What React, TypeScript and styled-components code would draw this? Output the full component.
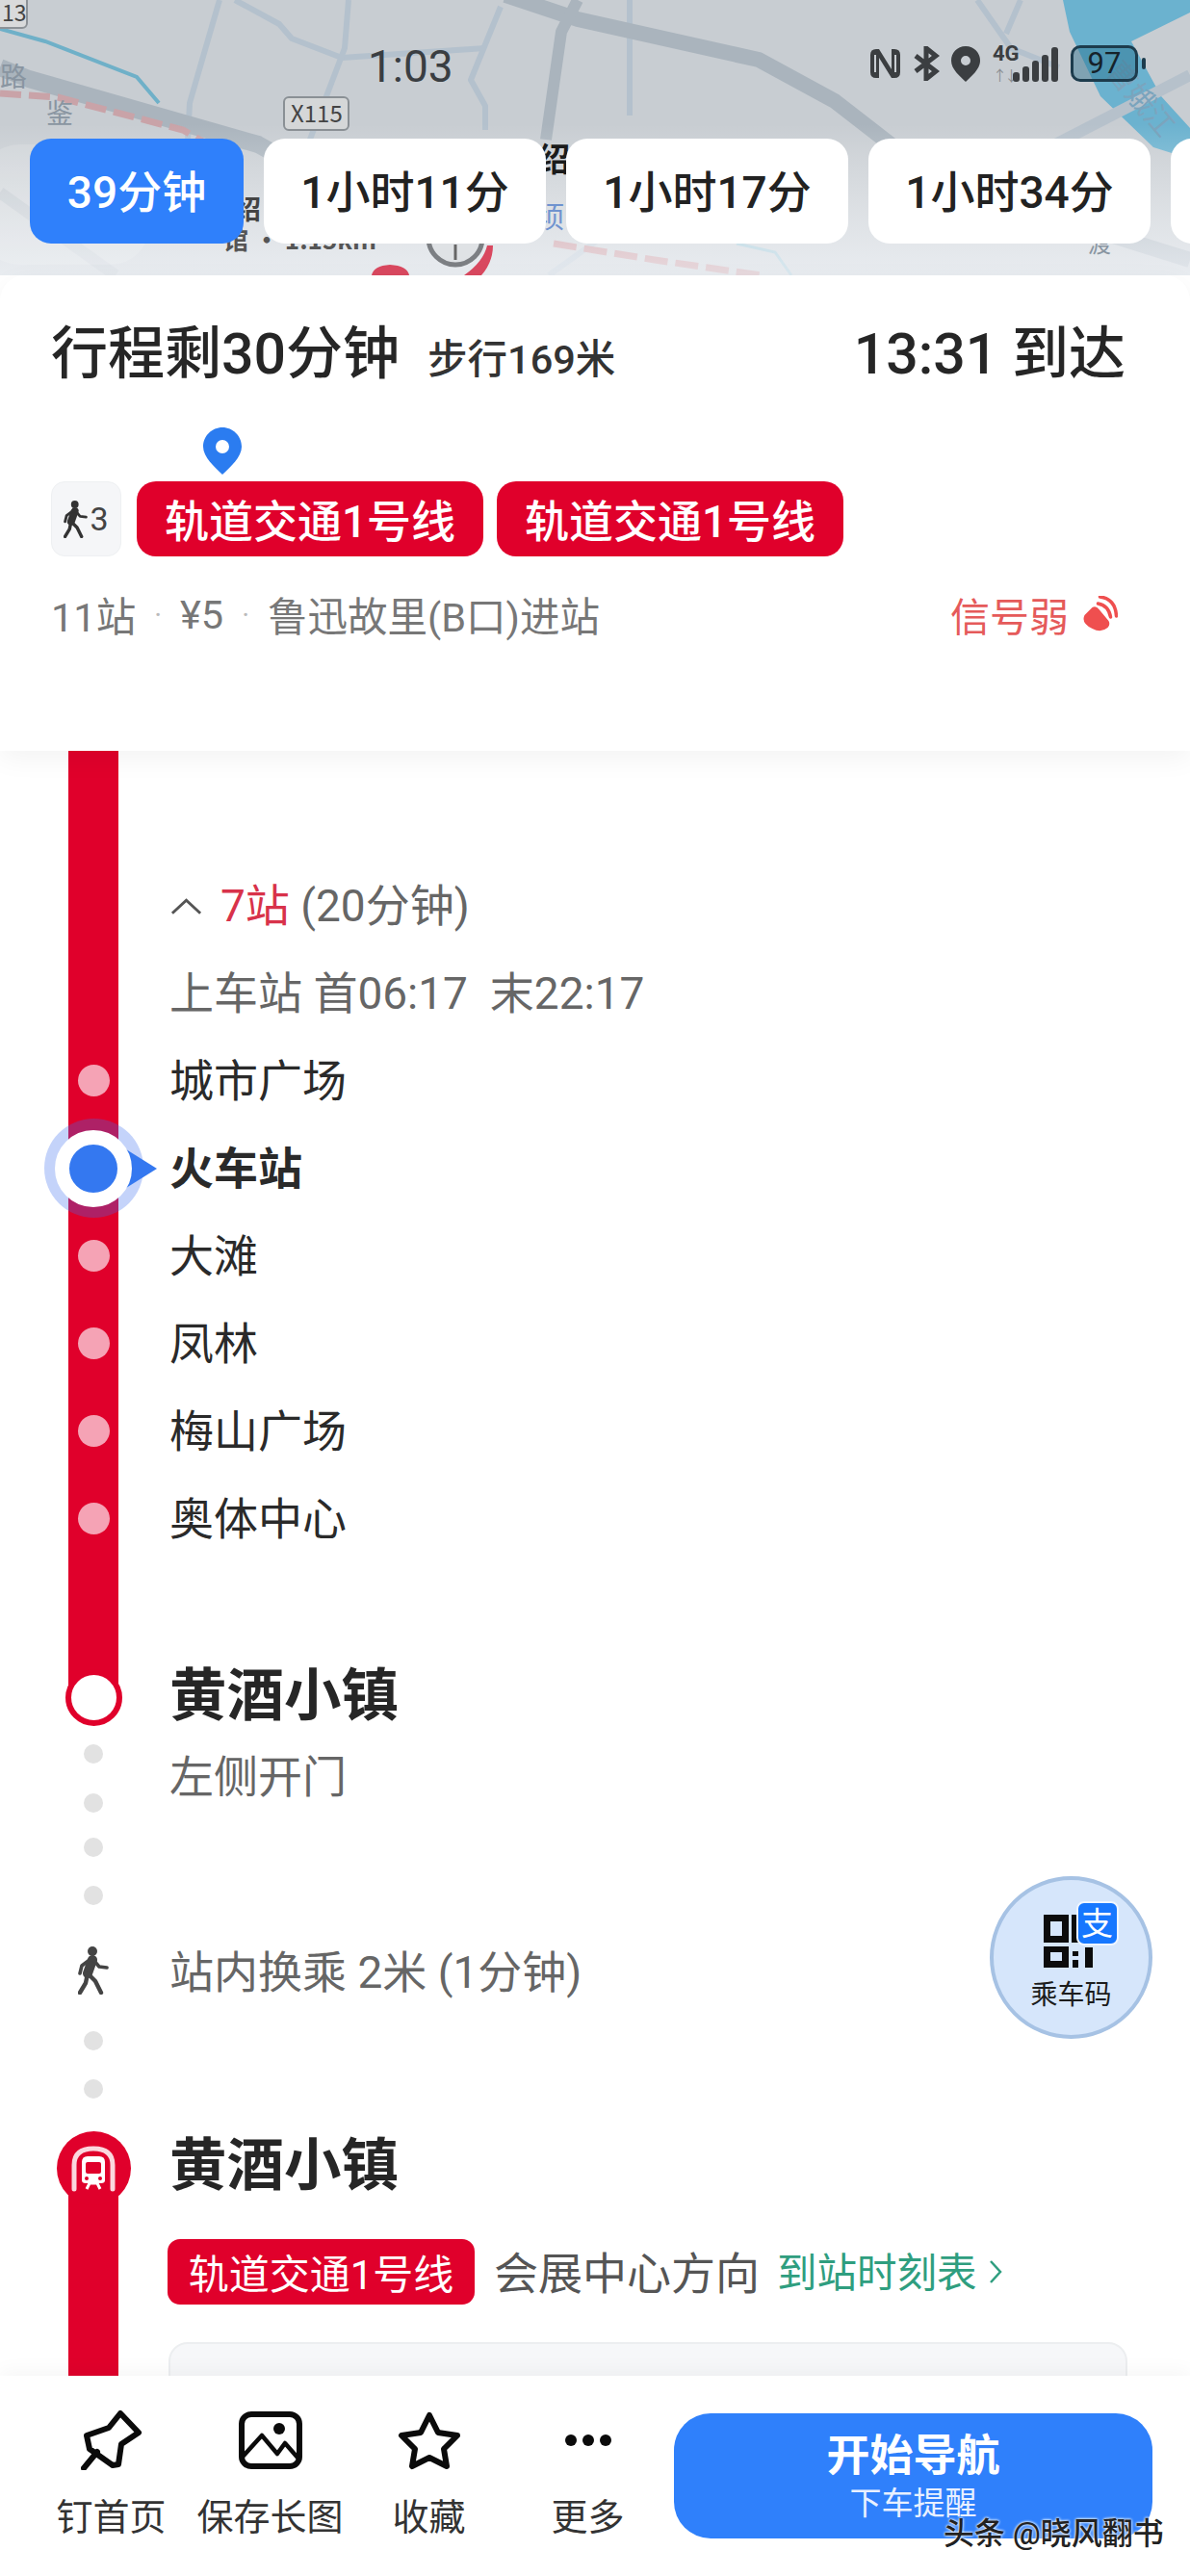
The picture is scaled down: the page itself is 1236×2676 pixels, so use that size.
import React from 'react'
import styled, { createGlobalStyle } from 'styled-components'

const RED = '#e0002b'
const BLUE = '#2f80fb'

const Global = createGlobalStyle`
  html, body { margin: 0; padding: 0; background: #fff; }
  body { font-family: Roboto, "Noto Sans CJK SC", sans-serif; color: #222; }
`

const stops = ['城市广场', '火车站', '大滩', '凤林', '梅山广场', '奥体中心']
const tabs = ['1小时11分', '1小时17分', '1小时34分']

const MapArt = () => (
  <MapSvg viewBox="0 0 1236 286">
    <defs>
      <linearGradient id="fade" x1="0" y1="0" x2="0" y2="1">
        <stop offset="0.45" stopColor="#fff" stopOpacity="0" />
        <stop offset="1" stopColor="#f3f6fa" stopOpacity="0.75" />
      </linearGradient>
    </defs>
    <rect width="1236" height="286" fill="#c8cdd2" />
    <polygon points="1104,0 1236,0 1236,13 1175,43 1206,100 1236,133 1236,165 1198,153 1143,100 1111,33" fill="#6bb2cf" />
    <g fill="none" stroke="#b4c1cd" strokeWidth="6" strokeLinejoin="round">
      <path d="M228 0 L197 107 L190 240" />
      <path d="M244 0 L290 25 L303 40 L355 60 L504 50" />
      <path d="M362 0 L358 50 L339 100 L320 150" />
      <path d="M520 7 L489 83 L504 110 L504 135" />
      <path d="M654 0 L654 120" />
      <path d="M1015 0 L1050 50 L1100 70" />
      <path d="M1060 0 L1045 35" />
      <path d="M620 250 L570 286" />
    </g>
    <path d="M1096 150 L1236 78" fill="none" stroke="#b6c1cb" strokeWidth="12" />
    <g fill="none" stroke="#aab4bd" strokeLinejoin="round">
      <path d="M525 -5 L600 20 L788 62 L867 105 L925 150" strokeWidth="16" />
      <path d="M600 0 L583 33 L567 145" strokeWidth="12" />
      <path d="M0 70 L30 82 L268 150 L340 190" strokeWidth="18" />
      <path d="M1140 240 L1236 270" strokeWidth="16" />
      <path d="M0 200 L120 286" strokeWidth="12" opacity="0.6" />
    </g>
    <path d="M0 30 L47 43 L142 80 L165 107" fill="none" stroke="#6fb0c8" strokeWidth="4" />
    <path d="M765 253 L805 262 L822 286" fill="none" stroke="#8fbfd0" strokeWidth="3" />
    <path d="M0 97 L60 101 L190 135 L250 170" fill="none" stroke="#c9a3a8" strokeWidth="7" strokeDasharray="22 8" />
    <path d="M575 253 L680 270 L790 286" fill="none" stroke="#c4858c" strokeWidth="7" strokeDasharray="24 8" />
    <rect width="1236" height="286" fill="url(#fade)" />
    <rect x="-20" y="150" width="175" height="125" rx="40" fill="#fff" opacity="0.14" />
    <MapLabel x="0" y="90" fontSize="28" fill="#8995a1">路</MapLabel>
    <MapLabel x="48" y="128" fontSize="28" fill="#8995a1">鉴</MapLabel>
    <MapLabel x="558" y="178" fontSize="34" fontWeight="700" fill="#1b1b1b">绍</MapLabel>
    <MapLabel x="556" y="236" fontSize="30" fill="#6f93cf">顷</MapLabel>
    <MapLabel x="243" y="228" fontSize="28" fontWeight="700" fill="#444">绍</MapLabel>
    <MapLabel x="232" y="259" fontSize="26" fontWeight="700" fill="#555">馆 · 1.15km</MapLabel>
    <MapLabel transform="translate(1148 75) rotate(50)" x="0" y="0" fontSize="30" fill="#7ba4bd">曹娥江</MapLabel>
    <MapLabel x="1130" y="262" fontSize="24" fill="#8995a1">渡</MapLabel>
    <circle cx="473" cy="247" r="28" fill="#dfe2e5" stroke="#7c7f83" strokeWidth="5" />
    <path d="M473 254 V270" stroke="#666" strokeWidth="3" />
    <path d="M506 255 Q502 272 482 286 L500 286 Q512 272 512 255 Z" fill="#d9485f" />
    <path d="M386 286 Q388 276 405 275 Q423 276 425 286 Z" fill="#d9485f" />
    <rect x="-30" y="-8" width="58" height="37" rx="5" fill="#d9dadb" stroke="#8d9297" strokeWidth="2" />
    <MapLabel x="2" y="22" fontSize="23" fill="#444">13</MapLabel>
    <rect x="295" y="101" width="67" height="34" rx="5" fill="#d5d7d8" stroke="#8a9095" strokeWidth="2" />
    <MapLabel x="302" y="127" fontSize="24" fill="#444">X115</MapLabel>
  </MapSvg>
)

const StatusIcons = () => (
  <StatusGroup>
    <svg width="35" height="34" viewBox="0 0 35 34" fill="none">
      <path d="M11 2 H8 Q2 2 2 8 V26 Q2 32 8 32 H11 V11 L24 32 H27 Q33 32 33 26 V8 Q33 2 27 2 H24 V23 L11 2 Z" fill="#3b3e41" />
      <path d="M7 8 V26 M28 8 V26" stroke="#c8cdd2" strokeWidth="2" />
    </svg>
    <svg width="27" height="36" viewBox="0 0 27 36">
      <path d="M2 10 L23 26 L13 34 V2 L23 10 L2 26" fill="none" stroke="#3b3e41" strokeWidth="5" />
    </svg>
    <svg width="30" height="37" viewBox="0 0 30 37">
      <path fillRule="evenodd" fill="#3b3e41" d="M15 0 C6 0 0 7 0 15 C0 24 9 31 15 37 C21 31 30 24 30 15 C30 7 24 0 15 0 Z M15 10 A5 5 0 1 1 15 20 A5 5 0 1 1 15 10 Z" />
    </svg>
    <Signal>
      <FourG>4G</FourG>
      <Arrows>↑↓</Arrows>
      <Bars>
        {[10, 16, 22, 28, 36].map(h => (
          <Bar key={h} style={{ height: h }} />
        ))}
      </Bars>
    </Signal>
    <Battery>97</Battery>
    <BatteryNub />
  </StatusGroup>
)

const WalkIcon = ({ w, h, color }: { w: number; h: number; color: string }) => (
  <svg width={w} height={h} viewBox="0 0 32 50" fill="none" stroke={color} strokeLinecap="round" strokeLinejoin="round">
    <circle cx="15" cy="5" r="5" fill={color} stroke="none" />
    <path d="M15 14 L10 28" strokeWidth="10" />
    <path d="M16 14 L22 21 L30 22" strokeWidth="3.6" />
    <path d="M12 14 L4 20 L2 28" strokeWidth="3.6" />
    <path d="M10 28 L8 38 L2 48" strokeWidth="4.4" />
    <path d="M10 28 L18 36 L24 48" strokeWidth="4.4" />
  </svg>
)

const WeakIcon = () => (
  <svg width="37" height="38" viewBox="0 0 36 38">
    <path d="M2 20 L10 12 Q14 10 17 14 L27 26 Q29 30 26 33 Q19 39 10 34 Q-2 28 2 20 Z" fill="#ef4f4f" />
    <path d="M16 8 Q27 10 29 22 M18 1 Q34 3 35 21" fill="none" stroke="#ef4f4f" strokeWidth="3.5" strokeLinecap="round" />
  </svg>
)

const PinIcon = () => (
  <svg width="40" height="49" viewBox="0 0 40 49">
    <path fillRule="evenodd" fill="#2b7cf0" d="M20 0 C9 0 0 9 0 20 C0 31 12 41 20 49 C28 41 40 31 40 20 C40 9 31 0 20 0 Z M20 13 A7 7 0 1 1 20 27 A7 7 0 1 1 20 13 Z" />
  </svg>
)

const MetroIcon = () => (
  <svg width="46" height="48" viewBox="0 0 46 48" fill="none">
    <path d="M3 45 V20 Q3 3 23 3 Q43 3 43 20 V45" stroke="#fbd7de" strokeWidth="5" strokeLinecap="round" />
    <path d="M11 36 V17 Q11 11 17 11 H29 Q35 11 35 17 V36 Q35 39 31 39 H15 Q11 39 11 36 Z" fill="#fff" />
    <rect x="15" y="17" width="16" height="12" rx="2" fill={RED} />
    <path d="M16 45 L19 39 H27 L30 45" stroke="#fff" strokeWidth="3" />
    <circle cx="16" cy="34" r="2" fill={RED} />
    <circle cx="30" cy="34" r="2" fill={RED} />
  </svg>
)

const NavPin = () => (
  <svg width="64" height="62" viewBox="0 0 64 62" fill="none" stroke="#0b0b0b" strokeWidth="6" strokeLinejoin="round" strokeLinecap="round">
    <path d="M41 3 L60 23 L42 35 L39 56 L33 57 L9 40 L6 26 L29 18 Z" />
    <path d="M17 43 L3 60" />
  </svg>
)

const NavImage = () => (
  <svg width="66" height="60" viewBox="0 0 66 60" fill="none" stroke="#0b0b0b" strokeWidth="6" strokeLinejoin="round">
    <rect x="3" y="3" width="60" height="54" rx="10" />
    <circle cx="42" cy="18" r="6" fill="#0b0b0b" stroke="none" />
    <path d="M4 47 L24 25 L40 44 L48 33 L62 49" strokeWidth="4.5" />
  </svg>
)

const NavStar = () => (
  <svg width="66" height="62" viewBox="0 0 66 62" fill="none" stroke="#0b0b0b" strokeWidth="6" strokeLinejoin="round">
    <path d="M33 5 L42 23 L62 26 L48 40 L51 58 L33 49 L15 58 L18 40 L4 26 L24 23 Z" />
  </svg>
)

const QrCode = () => (
  <svg width="54" height="58" viewBox="0 0 54 58">
    <path fillRule="evenodd" fill="#0c0c0c" d="M2 2 H28 V31 H2 Z M9 9 V24 H21 V9 Z" />
    <path fillRule="evenodd" fill="#0c0c0c" d="M2 35 H28 V57 H2 Z M9 41 V50 H21 V41 Z" />
    <rect x="31" y="2" width="7" height="29" fill="#0c0c0c" />
    <rect x="32" y="40" width="6" height="5" fill="#0c0c0c" />
    <rect x="32" y="49" width="6" height="8" fill="#0c0c0c" />
    <rect x="45" y="36" width="8" height="21" fill="#0c0c0c" />
  </svg>
)

const App = () => {
  return (
    <Page>
      <Global />
      <Header>
        <MapArt />
        <StatusBar>
          <Time>1:03</Time>
          <StatusIcons />
        </StatusBar>
        <Tabs>
          <Tab $active $w={222}>39分钟</Tab>
          {tabs.map(t => (
            <Tab key={t} $w={293}>{t}</Tab>
          ))}
          <Tab $w={120} />
        </Tabs>
      </Header>

      <Panel>
        <TitleRow>
          <Title>行程剩30分钟</Title>
          <Walk>步行169米</Walk>
          <Arrive>13:31 到达</Arrive>
        </TitleRow>
        <Route>
          <PinSpot><PinIcon /></PinSpot>
          <WalkChip>
            <WalkIcon w={25} h={39} color="#333" />
            <ChipNum>3</ChipNum>
          </WalkChip>
          <LinePill>轨道交通1号线</LinePill>
          <LinePill>轨道交通1号线</LinePill>
        </Route>
        <Meta>
          <span>11站</span>
          <Sep>·</Sep>
          <span>¥5</span>
          <Sep>·</Sep>
          <span>鲁迅故里(B口)进站</span>
          <Weak>信号弱 <WeakIcon /></Weak>
        </Meta>
      </Panel>

      <Main>
        <Row $h={115}><Rail /></Row>
        <Row $h={91}>
          <Rail />
          <Label>
            <Chevron viewBox="0 0 36 20"><path d="M3 18 L18 4 L33 18" /></Chevron>
            <Count>7站</Count>
            <Muted> (20分钟)</Muted>
          </Label>
        </Row>
        <Row $h={91}>
          <Rail />
          <Label $grey>上车站 首06:17&nbsp;&nbsp;末22:17</Label>
        </Row>
        {stops.map((s, i) => (
          <Row $h={91} key={s}>
            <Rail>
              {i === 1 ? (
                <Marker><MarkerDot /><MarkerTip /></Marker>
              ) : (
                <Stop />
              )}
            </Rail>
            <Label $bold={i === 1}>{s}</Label>
          </Row>
        ))}
        <Row $h={109}><Rail /></Row>
        <Row $h={60}>
          <Rail $until={33}><EndRing /></Rail>
          <StationName>黄酒小镇</StationName>
        </Row>

        <Transfer>
          <GreyRail>
            <GreyDot $top={20} />
            <GreyDot $top={31} />
            <GreyDot $top={26} />
            <GreyDot $top={30} />
            <WalkSlot><WalkIcon w={32} h={50} color="#444" /></WalkSlot>
            <GreyDot $top={38} />
            <GreyDot $top={30} />
          </GreyRail>
          <TransferText>
            <Label $grey>左侧开门</Label>
            <TransferNote>站内换乘 2米 (1分钟)</TransferNote>
          </TransferText>
        </Transfer>

        <NextStation>
          <HeadRail>
            <Head><MetroIcon /></Head>
          </HeadRail>
          <NextBody>
            <StationName>黄酒小镇</StationName>
            <Direction>
              <SmallPill>轨道交通1号线</SmallPill>
              <DirText>会展中心方向</DirText>
              <Timetable>到站时刻表</Timetable>
              <TimeChevron viewBox="0 0 14 26"><path d="M2 2 L12 13 L2 24" /></TimeChevron>
            </Direction>
            <GreyCard />
          </NextBody>
        </NextStation>
      </Main>

      <BottomBar>
        <NavItem><NavIcon><NavPin /></NavIcon><NavText>钉首页</NavText></NavItem>
        <NavItem><NavIcon><NavImage /></NavIcon><NavText>保存长图</NavText></NavItem>
        <NavItem><NavIcon><NavStar /></NavIcon><NavText>收藏</NavText></NavItem>
        <NavItem>
          <NavIcon><More><i /><i /><i /></More></NavIcon>
          <NavText>更多</NavText>
        </NavItem>
        <StartButton>
          <StartTitle>开始导航</StartTitle>
          <StartSub>下车提醒</StartSub>
        </StartButton>
      </BottomBar>

      <RideCode>
        <QrWrap>
          <QrCode />
          <AliBadge>支</AliBadge>
        </QrWrap>
        <RideText>乘车码</RideText>
      </RideCode>
      <Watermark>头条 @晓风翻书</Watermark>
    </Page>
  )
}

export default App

const Page = styled.div`
  position: relative;
  width: 1236px;
  height: 2676px;
  overflow: hidden;
  display: flex;
  flex-direction: column;
  background: #fff;
`
const Header = styled.header`
  position: relative;
  height: 286px;
  flex: none;
  overflow: hidden;
`
const MapSvg = styled.svg`
  position: absolute;
  inset: 0;
  width: 1236px;
  height: 286px;
`
const MapLabel = styled.text`
  font-family: "Noto Sans CJK SC", Roboto, sans-serif;
`
const StatusBar = styled.div`
  position: relative;
  height: 144px;
  box-sizing: border-box;
  padding: 46px 46px 0 382px;
  display: flex;
  align-items: flex-start;
  justify-content: space-between;
`
const Time = styled.div`
  font-size: 46px;
  line-height: 46px;
  color: #3a3e42;
`
const StatusGroup = styled.div`
  display: flex;
  align-items: center;
  gap: 12px;
  height: 40px;
`
const Signal = styled.div`
  position: relative;
  width: 68px;
  height: 38px;
  margin-left: 1px;
`
const FourG = styled.span`
  position: absolute;
  left: 0;
  top: -3px;
  font-size: 22px;
  line-height: 24px;
  font-weight: 700;
  color: #3b3e41;
`
const Arrows = styled.span`
  position: absolute;
  left: 0;
  bottom: -3px;
  font-size: 15px;
  line-height: 18px;
  letter-spacing: -3px;
  color: #8b8f93;
`
const Bars = styled.div`
  position: absolute;
  right: 0;
  bottom: 0;
  display: flex;
  align-items: flex-end;
  gap: 3px;
`
const Bar = styled.span`
  width: 7px;
  border-radius: 3px;
  background: #3b3e41;
`
const Battery = styled.div`
  width: 70px;
  height: 38px;
  margin-left: 1px;
  box-sizing: border-box;
  border: 3px solid #1d3c4d;
  border-radius: 10px;
  background: rgba(40, 110, 140, 0.45);
  text-align: center;
  font-size: 31px;
  line-height: 32px;
  color: #16222a;
`
const BatteryNub = styled.span`
  width: 4px;
  height: 12px;
  margin-left: -8px;
  border-radius: 2px;
  background: #1d3c4d;
`
const Tabs = styled.div`
  position: relative;
  display: flex;
  gap: 21px;
  padding-left: 31px;
`
const Tab = styled.div<{ $active?: boolean; $w: number }>`
  flex: none;
  box-sizing: border-box;
  width: ${p => p.$w}px;
  height: 109px;
  padding-bottom: 6px;
  display: flex;
  align-items: center;
  justify-content: center;
  border-radius: 22px;
  font-size: 46px;
  font-weight: 500;
  background: ${p => (p.$active ? BLUE : '#fff')};
  color: ${p => (p.$active ? '#fff' : '#222')};
`
const Panel = styled.section`
  position: relative;
  z-index: 2;
  height: 494px;
  flex: none;
  box-sizing: border-box;
  padding: 50px 67px 0 53px;
  background: #fff;
  border-radius: 26px 26px 0 0;
  box-shadow: 0 8px 28px rgba(0, 0, 0, 0.05);
`
const TitleRow = styled.div`
  display: flex;
  align-items: baseline;
  height: 64px;
`
const Title = styled.h1`
  margin: 0;
  font-size: 59px;
  line-height: 64px;
  font-weight: 500;
  color: #262626;
`
const Walk = styled.span`
  margin-left: 29px;
  font-size: 41.5px;
  font-weight: 500;
  color: #333;
`
const Arrive = styled.span`
  margin-left: auto;
  font-size: 59px;
  line-height: 64px;
  font-weight: 500;
  color: #262626;
`
const Route = styled.div`
  position: relative;
  display: flex;
  gap: 14px;
  margin-top: 100px;
  height: 78px;
`
const PinSpot = styled.div`
  position: absolute;
  left: 158px;
  top: -56px;
`
const WalkChip = styled.div`
  width: 73px;
  margin-right: 2px;
  display: flex;
  align-items: center;
  justify-content: center;
  gap: 2px;
  border-radius: 14px;
  background: #f5f6f8;
  border: 1px solid #eef0f2;
  box-sizing: border-box;
`
const ChipNum = styled.span`
  font-size: 34px;
  color: #444;
`
const LinePill = styled.div`
  width: 360px;
  padding-bottom: 2px;
  box-sizing: border-box;
  display: flex;
  align-items: center;
  justify-content: center;
  border-radius: 20px;
  background: ${RED};
  color: #fff;
  font-size: 46px;
  font-weight: 500;
`
const Meta = styled.div`
  display: flex;
  align-items: center;
  gap: 19px;
  margin-top: 35px;
  height: 50px;
  font-size: 41.5px;
  color: #777;
`
const Sep = styled.span`
  color: #bbb;
  font-size: 30px;
`
const Weak = styled.span`
  margin-left: auto;
  margin-right: 8px;
  display: flex;
  align-items: center;
  gap: 14px;
  color: #e55a5a;
  font-size: 41px;
`
const Main = styled.main`
  position: relative;
  flex: 1;
  min-height: 0;
  overflow: hidden;
`
const Row = styled.div<{ $h: number }>`
  display: flex;
  align-items: center;
  height: ${p => p.$h}px;
`
const Rail = styled.div<{ $until?: number }>`
  flex: none;
  align-self: stretch;
  width: 52px;
  margin: 0 53px 0 71px;
  display: flex;
  align-items: center;
  justify-content: center;
  background: ${p => (p.$until ? `linear-gradient(${RED} ${p.$until}px, transparent ${p.$until}px)` : RED)};
`
const Label = styled.div<{ $grey?: boolean; $bold?: boolean }>`
  display: flex;
  align-items: center;
  font-size: 46px;
  line-height: 60px;
  white-space: pre;
  font-weight: ${p => (p.$bold ? 700 : 400)};
  color: ${p => (p.$grey ? '#666' : '#2a2a2a')};
`
const Chevron = styled.svg`
  width: 35px;
  height: 20px;
  margin-right: 18px;
  fill: none;
  stroke: #555;
  stroke-width: 3;
`
const Count = styled.span`
  color: #d8324a;
`
const Muted = styled.span`
  color: #666;
`
const Stop = styled.span`
  width: 33px;
  height: 33px;
  border-radius: 50%;
  background: #f5a3b5;
`
const Marker = styled.div`
  position: relative;
  flex: none;
  width: 103px;
  height: 103px;
  box-sizing: border-box;
  border-radius: 50%;
  background: rgba(58, 110, 240, 0.3);
  display: flex;
  align-items: center;
  justify-content: center;
`
const MarkerDot = styled.span`
  position: relative;
  z-index: 1;
  width: 50px;
  height: 50px;
  border: 15px solid #fff;
  border-radius: 50%;
  background: #3478f0;
`
const MarkerTip = styled.span`
  position: absolute;
  left: 85px;
  top: 32px;
  width: 0;
  height: 0;
  border-style: solid;
  border-width: 20px 0 20px 32px;
  border-color: transparent transparent transparent #3478f0;
`
const EndRing = styled.span`
  flex: none;
  box-sizing: border-box;
  width: 59px;
  height: 59px;
  margin-top: 3px;
  border: 6px solid ${RED};
  border-radius: 50%;
  background: #fff;
`
const StationName = styled.h2`
  margin: 0;
  font-size: 59.5px;
  line-height: 60px;
  font-weight: 700;
  color: #262626;
`
const Transfer = styled.div`
  display: flex;
  height: 422px;
`
const GreyRail = styled.div`
  flex: none;
  width: 52px;
  margin: 0 53px 0 71px;
  display: flex;
  flex-direction: column;
  align-items: center;
`
const GreyDot = styled.span<{ $top: number }>`
  flex: none;
  width: 20px;
  height: 20px;
  margin-top: ${p => p.$top}px;
  border-radius: 50%;
  background: #e2e2e2;
`
const WalkSlot = styled.div`
  flex: none;
  height: 50px;
  margin-top: 43px;
  display: flex;
  justify-content: center;
`
const TransferText = styled.div`
  padding-top: 24px;
`
const TransferNote = styled(Label).attrs({ $grey: true })`
  margin-top: 143px;
`
const NextStation = styled.div`
  display: flex;
  height: 300px;
`
const HeadRail = styled.div`
  flex: none;
  width: 52px;
  margin: 0 53px 0 71px;
  display: flex;
  justify-content: center;
  background: linear-gradient(transparent 50px, ${RED} 50px);
`
const Head = styled.div`
  flex: none;
  width: 77px;
  height: 77px;
  display: flex;
  align-items: center;
  justify-content: center;
  border-radius: 50%;
  background: ${RED};
`
const NextBody = styled.div`
  flex: 1;
  padding: 6px 65px 0 0;
  margin-left: -2px;
  & > h2 { margin-left: 2px; }
`
const Direction = styled.div`
  display: flex;
  align-items: center;
  margin-top: 46px;
  height: 68px;
`
const SmallPill = styled.div`
  width: 319px;
  height: 68px;
  padding-bottom: 2px;
  box-sizing: border-box;
  display: flex;
  align-items: center;
  justify-content: center;
  border-radius: 13px;
  background: ${RED};
  color: #fff;
  font-size: 42px;
`
const DirText = styled.span`
  margin: 0 0 5px 20px;
  font-size: 46px;
  color: #555;
`
const Timetable = styled.span`
  margin: 0 0 4px 18px;
  font-size: 41.5px;
  color: #2f9e7f;
`
const TimeChevron = styled.svg`
  width: 14px;
  height: 26px;
  margin-left: 12px;
  fill: none;
  stroke: #2f9e7f;
  stroke-width: 2.5;
`
const GreyCard = styled.div`
  margin: 39px 0 0 1px;
  height: 200px;
  border: 2px solid #eceef0;
  border-radius: 20px;
  background: #f6f7f9;
`
const BottomBar = styled.footer`
  position: relative;
  z-index: 2;
  height: 208px;
  flex: none;
  box-sizing: border-box;
  padding: 36px 39px 0 33px;
  display: flex;
  align-items: flex-start;
  background: #fff;
  box-shadow: 0 -6px 18px rgba(0, 0, 0, 0.035);
`
const NavItem = styled.div`
  width: 165px;
  flex: none;
  display: flex;
  flex-direction: column;
  align-items: center;
`
const NavIcon = styled.div`
  height: 62px;
  display: flex;
  align-items: center;
  justify-content: center;
`
const NavText = styled.div`
  margin-top: 27px;
  font-size: 38px;
  line-height: 44px;
  color: #333;
  white-space: nowrap;
`
const More = styled.div`
  display: flex;
  gap: 6px;
  i {
    width: 12px;
    height: 12px;
    border-radius: 50%;
    background: #0b0b0b;
  }
`
const StartButton = styled.div`
  flex: 1;
  height: 130px;
  margin: 3px 0 0 7px;
  display: flex;
  flex-direction: column;
  align-items: center;
  border-radius: 38px;
  background: ${BLUE};
  color: #fff;
`
const StartTitle = styled.div`
  margin-top: 18px;
  font-size: 45px;
  line-height: 54px;
  font-weight: 700;
`
const StartSub = styled.div`
  margin-top: 4px;
  font-size: 33px;
  line-height: 36px;
  color: #e8f0ff;
`
const RideCode = styled.div`
  position: absolute;
  z-index: 3;
  left: 1028px;
  top: 1949px;
  box-sizing: border-box;
  width: 169px;
  height: 169px;
  display: flex;
  flex-direction: column;
  align-items: center;
  padding-top: 34px;
  border: 4px solid #a6c2e4;
  border-radius: 50%;
  background: #d6e6fb;
`
const QrWrap = styled.div`
  position: relative;
  width: 54px;
  height: 58px;
  margin-left: -8px;
`
const AliBadge = styled.span`
  position: absolute;
  left: 36px;
  top: -12px;
  width: 40px;
  height: 42px;
  display: flex;
  align-items: center;
  justify-content: center;
  border: 2px solid #eef5ff;
  border-radius: 8px;
  background: #1677ff;
  color: #fff;
  font-size: 33px;
  line-height: 1;
`
const RideText = styled.div`
  margin-top: 12px;
  font-size: 28px;
  line-height: 32px;
  color: #1c1c1c;
`
const Watermark = styled.div`
  position: absolute;
  z-index: 4;
  left: 980px;
  top: 2611px;
  font-size: 32px;
  line-height: 42px;
  font-weight: 500;
  color: #222;
  white-space: nowrap;
  text-shadow: 0 0 3px #fff, 0 0 3px #fff;
`
